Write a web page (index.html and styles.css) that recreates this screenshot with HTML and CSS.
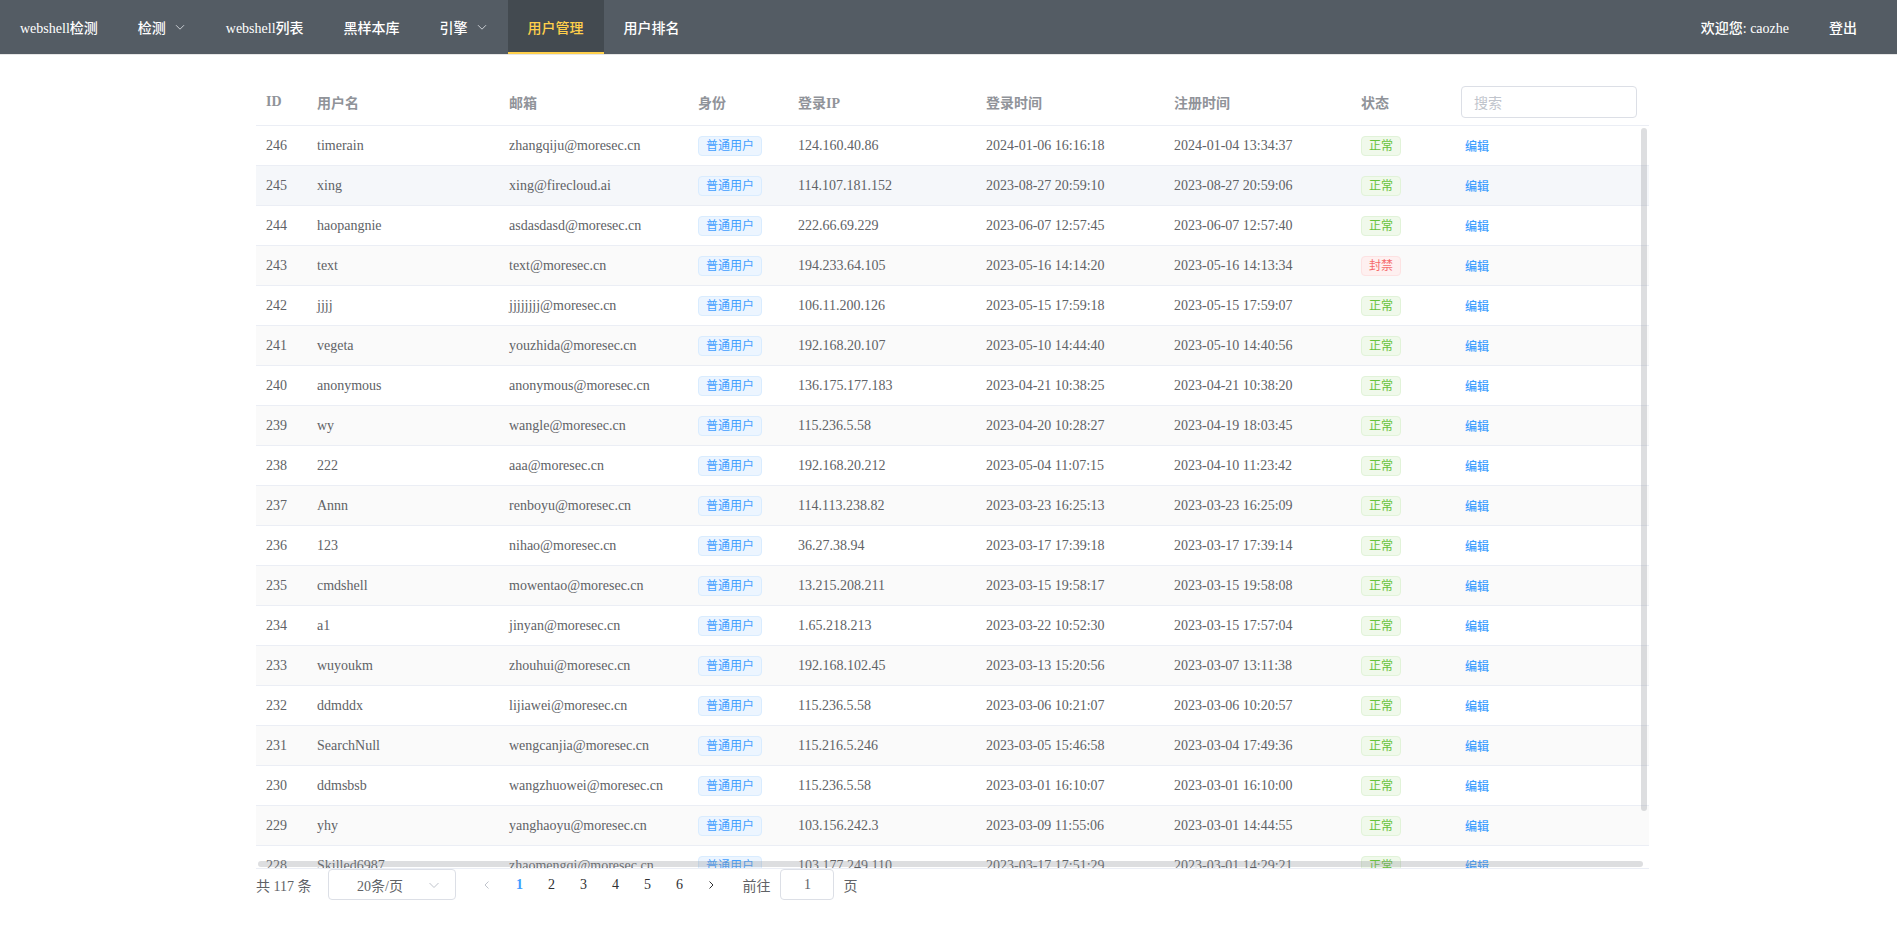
FILE: index.html
```html
<!DOCTYPE html>
<html lang="zh-CN">
<head>
<meta charset="utf-8">
<title>用户管理</title>
<link rel="stylesheet" href="styles.css">
</head>
<body>
<header class="nav">
  <ul class="menu">
    <li class="menu-item">webshell检测</li>
    <li class="menu-item">检测<svg class="nav-arrow" viewBox="0 0 12 12"><path d="M2 4.2 L6 8.2 L10 4.2"/></svg></li>
    <li class="menu-item">webshell列表</li>
    <li class="menu-item">黑样本库</li>
    <li class="menu-item">引擎<svg class="nav-arrow" viewBox="0 0 12 12"><path d="M2 4.2 L6 8.2 L10 4.2"/></svg></li>
    <li class="menu-item active">用户管理</li>
    <li class="menu-item">用户排名</li>
  </ul>
  <ul class="menu menu-right">
    <li class="menu-item">欢迎您: caozhe</li>
    <li class="menu-item">登出</li>
  </ul>
</header>

<main class="page">
  <section class="table">
    <div class="row head">
      <div class="cell">ID</div>
      <div class="cell">用户名</div>
      <div class="cell">邮箱</div>
      <div class="cell">身份</div>
      <div class="cell">登录IP</div>
      <div class="cell">登录时间</div>
      <div class="cell">注册时间</div>
      <div class="cell">状态</div>
      <div class="cell"><div class="search">搜索</div></div>
    </div>
    <div class="body">
      <div class="row"><div class="cell">246</div><div class="cell">timerain</div><div class="cell">zhangqiju@moresec.cn</div><div class="cell"><span class="tag tag-blue">普通用户</span></div><div class="cell">124.160.40.86</div><div class="cell">2024-01-06 16:16:18</div><div class="cell">2024-01-04 13:34:37</div><div class="cell"><span class="tag tag-green">正常</span></div><div class="cell"><span class="edit">编辑</span></div></div>
      <div class="row hover"><div class="cell">245</div><div class="cell">xing</div><div class="cell">xing@firecloud.ai</div><div class="cell"><span class="tag tag-blue">普通用户</span></div><div class="cell">114.107.181.152</div><div class="cell">2023-08-27 20:59:10</div><div class="cell">2023-08-27 20:59:06</div><div class="cell"><span class="tag tag-green">正常</span></div><div class="cell"><span class="edit">编辑</span></div></div>
      <div class="row"><div class="cell">244</div><div class="cell">haopangnie</div><div class="cell">asdasdasd@moresec.cn</div><div class="cell"><span class="tag tag-blue">普通用户</span></div><div class="cell">222.66.69.229</div><div class="cell">2023-06-07 12:57:45</div><div class="cell">2023-06-07 12:57:40</div><div class="cell"><span class="tag tag-green">正常</span></div><div class="cell"><span class="edit">编辑</span></div></div>
      <div class="row stripe"><div class="cell">243</div><div class="cell">text</div><div class="cell">text@moresec.cn</div><div class="cell"><span class="tag tag-blue">普通用户</span></div><div class="cell">194.233.64.105</div><div class="cell">2023-05-16 14:14:20</div><div class="cell">2023-05-16 14:13:34</div><div class="cell"><span class="tag tag-red">封禁</span></div><div class="cell"><span class="edit">编辑</span></div></div>
      <div class="row"><div class="cell">242</div><div class="cell">jjjj</div><div class="cell">jjjjjjjj@moresec.cn</div><div class="cell"><span class="tag tag-blue">普通用户</span></div><div class="cell">106.11.200.126</div><div class="cell">2023-05-15 17:59:18</div><div class="cell">2023-05-15 17:59:07</div><div class="cell"><span class="tag tag-green">正常</span></div><div class="cell"><span class="edit">编辑</span></div></div>
      <div class="row stripe"><div class="cell">241</div><div class="cell">vegeta</div><div class="cell">youzhida@moresec.cn</div><div class="cell"><span class="tag tag-blue">普通用户</span></div><div class="cell">192.168.20.107</div><div class="cell">2023-05-10 14:44:40</div><div class="cell">2023-05-10 14:40:56</div><div class="cell"><span class="tag tag-green">正常</span></div><div class="cell"><span class="edit">编辑</span></div></div>
      <div class="row"><div class="cell">240</div><div class="cell">anonymous</div><div class="cell">anonymous@moresec.cn</div><div class="cell"><span class="tag tag-blue">普通用户</span></div><div class="cell">136.175.177.183</div><div class="cell">2023-04-21 10:38:25</div><div class="cell">2023-04-21 10:38:20</div><div class="cell"><span class="tag tag-green">正常</span></div><div class="cell"><span class="edit">编辑</span></div></div>
      <div class="row stripe"><div class="cell">239</div><div class="cell">wy</div><div class="cell">wangle@moresec.cn</div><div class="cell"><span class="tag tag-blue">普通用户</span></div><div class="cell">115.236.5.58</div><div class="cell">2023-04-20 10:28:27</div><div class="cell">2023-04-19 18:03:45</div><div class="cell"><span class="tag tag-green">正常</span></div><div class="cell"><span class="edit">编辑</span></div></div>
      <div class="row"><div class="cell">238</div><div class="cell">222</div><div class="cell">aaa@moresec.cn</div><div class="cell"><span class="tag tag-blue">普通用户</span></div><div class="cell">192.168.20.212</div><div class="cell">2023-05-04 11:07:15</div><div class="cell">2023-04-10 11:23:42</div><div class="cell"><span class="tag tag-green">正常</span></div><div class="cell"><span class="edit">编辑</span></div></div>
      <div class="row stripe"><div class="cell">237</div><div class="cell">Annn</div><div class="cell">renboyu@moresec.cn</div><div class="cell"><span class="tag tag-blue">普通用户</span></div><div class="cell">114.113.238.82</div><div class="cell">2023-03-23 16:25:13</div><div class="cell">2023-03-23 16:25:09</div><div class="cell"><span class="tag tag-green">正常</span></div><div class="cell"><span class="edit">编辑</span></div></div>
      <div class="row"><div class="cell">236</div><div class="cell">123</div><div class="cell">nihao@moresec.cn</div><div class="cell"><span class="tag tag-blue">普通用户</span></div><div class="cell">36.27.38.94</div><div class="cell">2023-03-17 17:39:18</div><div class="cell">2023-03-17 17:39:14</div><div class="cell"><span class="tag tag-green">正常</span></div><div class="cell"><span class="edit">编辑</span></div></div>
      <div class="row stripe"><div class="cell">235</div><div class="cell">cmdshell</div><div class="cell">mowentao@moresec.cn</div><div class="cell"><span class="tag tag-blue">普通用户</span></div><div class="cell">13.215.208.211</div><div class="cell">2023-03-15 19:58:17</div><div class="cell">2023-03-15 19:58:08</div><div class="cell"><span class="tag tag-green">正常</span></div><div class="cell"><span class="edit">编辑</span></div></div>
      <div class="row"><div class="cell">234</div><div class="cell">a1</div><div class="cell">jinyan@moresec.cn</div><div class="cell"><span class="tag tag-blue">普通用户</span></div><div class="cell">1.65.218.213</div><div class="cell">2023-03-22 10:52:30</div><div class="cell">2023-03-15 17:57:04</div><div class="cell"><span class="tag tag-green">正常</span></div><div class="cell"><span class="edit">编辑</span></div></div>
      <div class="row stripe"><div class="cell">233</div><div class="cell">wuyoukm</div><div class="cell">zhouhui@moresec.cn</div><div class="cell"><span class="tag tag-blue">普通用户</span></div><div class="cell">192.168.102.45</div><div class="cell">2023-03-13 15:20:56</div><div class="cell">2023-03-07 13:11:38</div><div class="cell"><span class="tag tag-green">正常</span></div><div class="cell"><span class="edit">编辑</span></div></div>
      <div class="row"><div class="cell">232</div><div class="cell">ddmddx</div><div class="cell">lijiawei@moresec.cn</div><div class="cell"><span class="tag tag-blue">普通用户</span></div><div class="cell">115.236.5.58</div><div class="cell">2023-03-06 10:21:07</div><div class="cell">2023-03-06 10:20:57</div><div class="cell"><span class="tag tag-green">正常</span></div><div class="cell"><span class="edit">编辑</span></div></div>
      <div class="row stripe"><div class="cell">231</div><div class="cell">SearchNull</div><div class="cell">wengcanjia@moresec.cn</div><div class="cell"><span class="tag tag-blue">普通用户</span></div><div class="cell">115.216.5.246</div><div class="cell">2023-03-05 15:46:58</div><div class="cell">2023-03-04 17:49:36</div><div class="cell"><span class="tag tag-green">正常</span></div><div class="cell"><span class="edit">编辑</span></div></div>
      <div class="row"><div class="cell">230</div><div class="cell">ddmsbsb</div><div class="cell">wangzhuowei@moresec.cn</div><div class="cell"><span class="tag tag-blue">普通用户</span></div><div class="cell">115.236.5.58</div><div class="cell">2023-03-01 16:10:07</div><div class="cell">2023-03-01 16:10:00</div><div class="cell"><span class="tag tag-green">正常</span></div><div class="cell"><span class="edit">编辑</span></div></div>
      <div class="row stripe"><div class="cell">229</div><div class="cell">yhy</div><div class="cell">yanghaoyu@moresec.cn</div><div class="cell"><span class="tag tag-blue">普通用户</span></div><div class="cell">103.156.242.3</div><div class="cell">2023-03-09 11:55:06</div><div class="cell">2023-03-01 14:44:55</div><div class="cell"><span class="tag tag-green">正常</span></div><div class="cell"><span class="edit">编辑</span></div></div>
      <div class="row"><div class="cell">228</div><div class="cell">Skilled6987</div><div class="cell">zhaomengqi@moresec.cn</div><div class="cell"><span class="tag tag-blue">普通用户</span></div><div class="cell">103.177.249.110</div><div class="cell">2023-03-17 17:51:29</div><div class="cell">2023-03-01 14:29:21</div><div class="cell"><span class="tag tag-green">正常</span></div><div class="cell"><span class="edit">编辑</span></div></div>
      <div class="row stripe"><div class="cell">227</div><div class="cell">test01</div><div class="cell">test01@moresec.cn</div><div class="cell"><span class="tag tag-blue">普通用户</span></div><div class="cell">115.236.5.58</div><div class="cell">2023-02-28 10:12:40</div><div class="cell">2023-02-28 10:12:31</div><div class="cell"><span class="tag tag-green">正常</span></div><div class="cell"><span class="edit">编辑</span></div></div>
      <div class="vbar"></div>
      <div class="hbar"></div>
    </div>
  </section>

  <nav class="pagination">
    <span class="total">共 117 条</span>
    <div class="sizes">
      <span class="sizes-text">20条/页</span>
      <svg class="sizes-arrow" viewBox="0 0 12 12"><path d="M1.5 4 L6 8.5 L10.5 4"/></svg>
    </div>
    <span class="pbtn disabled"><svg viewBox="0 0 12 12"><path d="M7.5 2.5 L4 6 L7.5 9.5"/></svg></span>
    <span class="pbtn num current">1</span>
    <span class="pbtn num">2</span>
    <span class="pbtn num">3</span>
    <span class="pbtn num">4</span>
    <span class="pbtn num">5</span>
    <span class="pbtn num">6</span>
    <span class="pbtn"><svg viewBox="0 0 12 12"><path d="M4.5 2.5 L8 6 L4.5 9.5"/></svg></span>
    <span class="jump">前往</span>
    <div class="jump-input">1</div>
    <span class="jump-suffix">页</span>
  </nav>
</main>
</body>
</html>
```

FILE: styles.css
```css
* { box-sizing: border-box; }

html, body {
  margin: 0;
  padding: 0;
  background: #fff;
}

body {
  font-family: "Liberation Serif", "Noto Sans CJK SC", serif;
  font-size: 14px;
  color: #606266;
}

/* ---------- top navigation ---------- */
.nav {
  display: flex;
  justify-content: space-between;
  height: 55px;
  background: #545c64;
  border-bottom: 1px solid #e6e6e6;
  padding-right: 20px;
}

.menu {
  display: flex;
  list-style: none;
  margin: 0;
  padding: 0;
}

.menu-item {
  display: flex;
  align-items: center;
  height: 54px;
  padding: 0 20px;
  color: #fff;
  font-size: 14px;
  font-weight: 500;
  white-space: nowrap;
}

.menu-item.active {
  background: #434a50;
  color: #ffd04b;
  border-bottom: 2px solid #ffd04b;
  padding-top: 2px;
}

.nav-arrow {
  width: 12px;
  height: 12px;
  margin-left: 8px;
  fill: none;
  stroke: #c9cdd2;
  stroke-width: 1;
}

/* ---------- page ---------- */
.page {
  width: 1393px;
  margin: 23px 0 0 256px;
}

.table {
  width: 1393px;
}

.row {
  display: grid;
  grid-template-columns: 51px 192px 189px 100px 188px 188px 187px 100px 198px;
  height: 40px;
  border-bottom: 1px solid #ebeef5;
  background: #fff;
}

.row.stripe { background: #fafafa; }
.row.hover { background: #f5f7fa; }

.cell {
  display: flex;
  align-items: center;
  padding: 0 10px;
  white-space: nowrap;
  overflow: hidden;
}

.row.head {
  height: 48px;
  color: #909399;
  font-weight: bold;
}

.search {
  width: 176px;
  height: 32px;
  border: 1px solid #dcdfe6;
  border-radius: 4px;
  padding: 0 12px;
  display: flex;
  align-items: center;
  color: #c0c4cc;
  font-weight: normal;
  font-size: 14px;
  background: #fff;
}

.body {
  position: relative;
  height: 743px;
  overflow: hidden;
  border-bottom: 1px solid #ebeef5;
}

.tag {
  display: inline-flex;
  align-items: center;
  height: 20px;
  padding: 0 7px;
  border: 1px solid;
  border-radius: 4px;
  font-size: 12px;
  line-height: 1;
}

.tag-blue { background: #ecf5ff; border-color: #d9ecff; color: #409eff; }
.tag-green { background: #f0f9eb; border-color: #e1f3d8; color: #67c23a; }
.tag-red { background: #fef0f0; border-color: #fde2e2; color: #f56c6c; }

.edit {
  margin-left: 4px;
  color: #409eff;
  font-size: 12px;
  font-weight: 500;
}

/* overlay scrollbars */
.vbar {
  position: absolute;
  top: 2px;
  right: 2px;
  width: 6px;
  height: 683px;
  border-radius: 3px;
  background: rgba(144, 147, 153, 0.3);
}

.hbar {
  position: absolute;
  left: 2px;
  right: 6px;
  bottom: 1px;
  height: 6px;
  border-radius: 3px;
  background: rgba(144, 147, 153, 0.3);
}

/* ---------- pagination ---------- */
.pagination {
  display: flex;
  align-items: center;
  height: 31px;
  font-size: 14px;
  color: #606266;
}

.total {
  margin-right: 17px;
}

.sizes {
  position: relative;
  display: flex;
  align-items: center;
  width: 128px;
  height: 31px;
  border: 1px solid #dcdfe6;
  border-radius: 4px;
  padding-right: 25px;
  margin-right: 15px;
}

.sizes-text {
  flex: 1;
  text-align: center;
  color: #606266;
  font-size: 14px;
}

.sizes-arrow {
  position: absolute;
  right: 15px;
  top: 9px;
  width: 12px;
  height: 12px;
  fill: none;
  stroke: #c0c4cc;
  stroke-width: 1;
}

.pbtn {
  width: 32px;
  height: 28px;
  display: flex;
  align-items: center;
  justify-content: center;
  color: #303133;
}

.pbtn svg {
  width: 12px;
  height: 12px;
  fill: none;
  stroke: #303133;
  stroke-width: 1;
}

.pbtn.disabled svg { stroke: #c0c4cc; }

.pbtn.num { font-size: 14px; }
.pbtn.current { color: #409eff; font-weight: bold; }

.jump {
  margin-left: 15px;
  margin-right: 10px;
}

.jump-input {
  width: 54px;
  height: 31px;
  border: 1px solid #dcdfe6;
  border-radius: 4px;
  display: flex;
  align-items: center;
  justify-content: center;
  color: #606266;
}

.jump-suffix {
  margin-left: 9px;
}
```
